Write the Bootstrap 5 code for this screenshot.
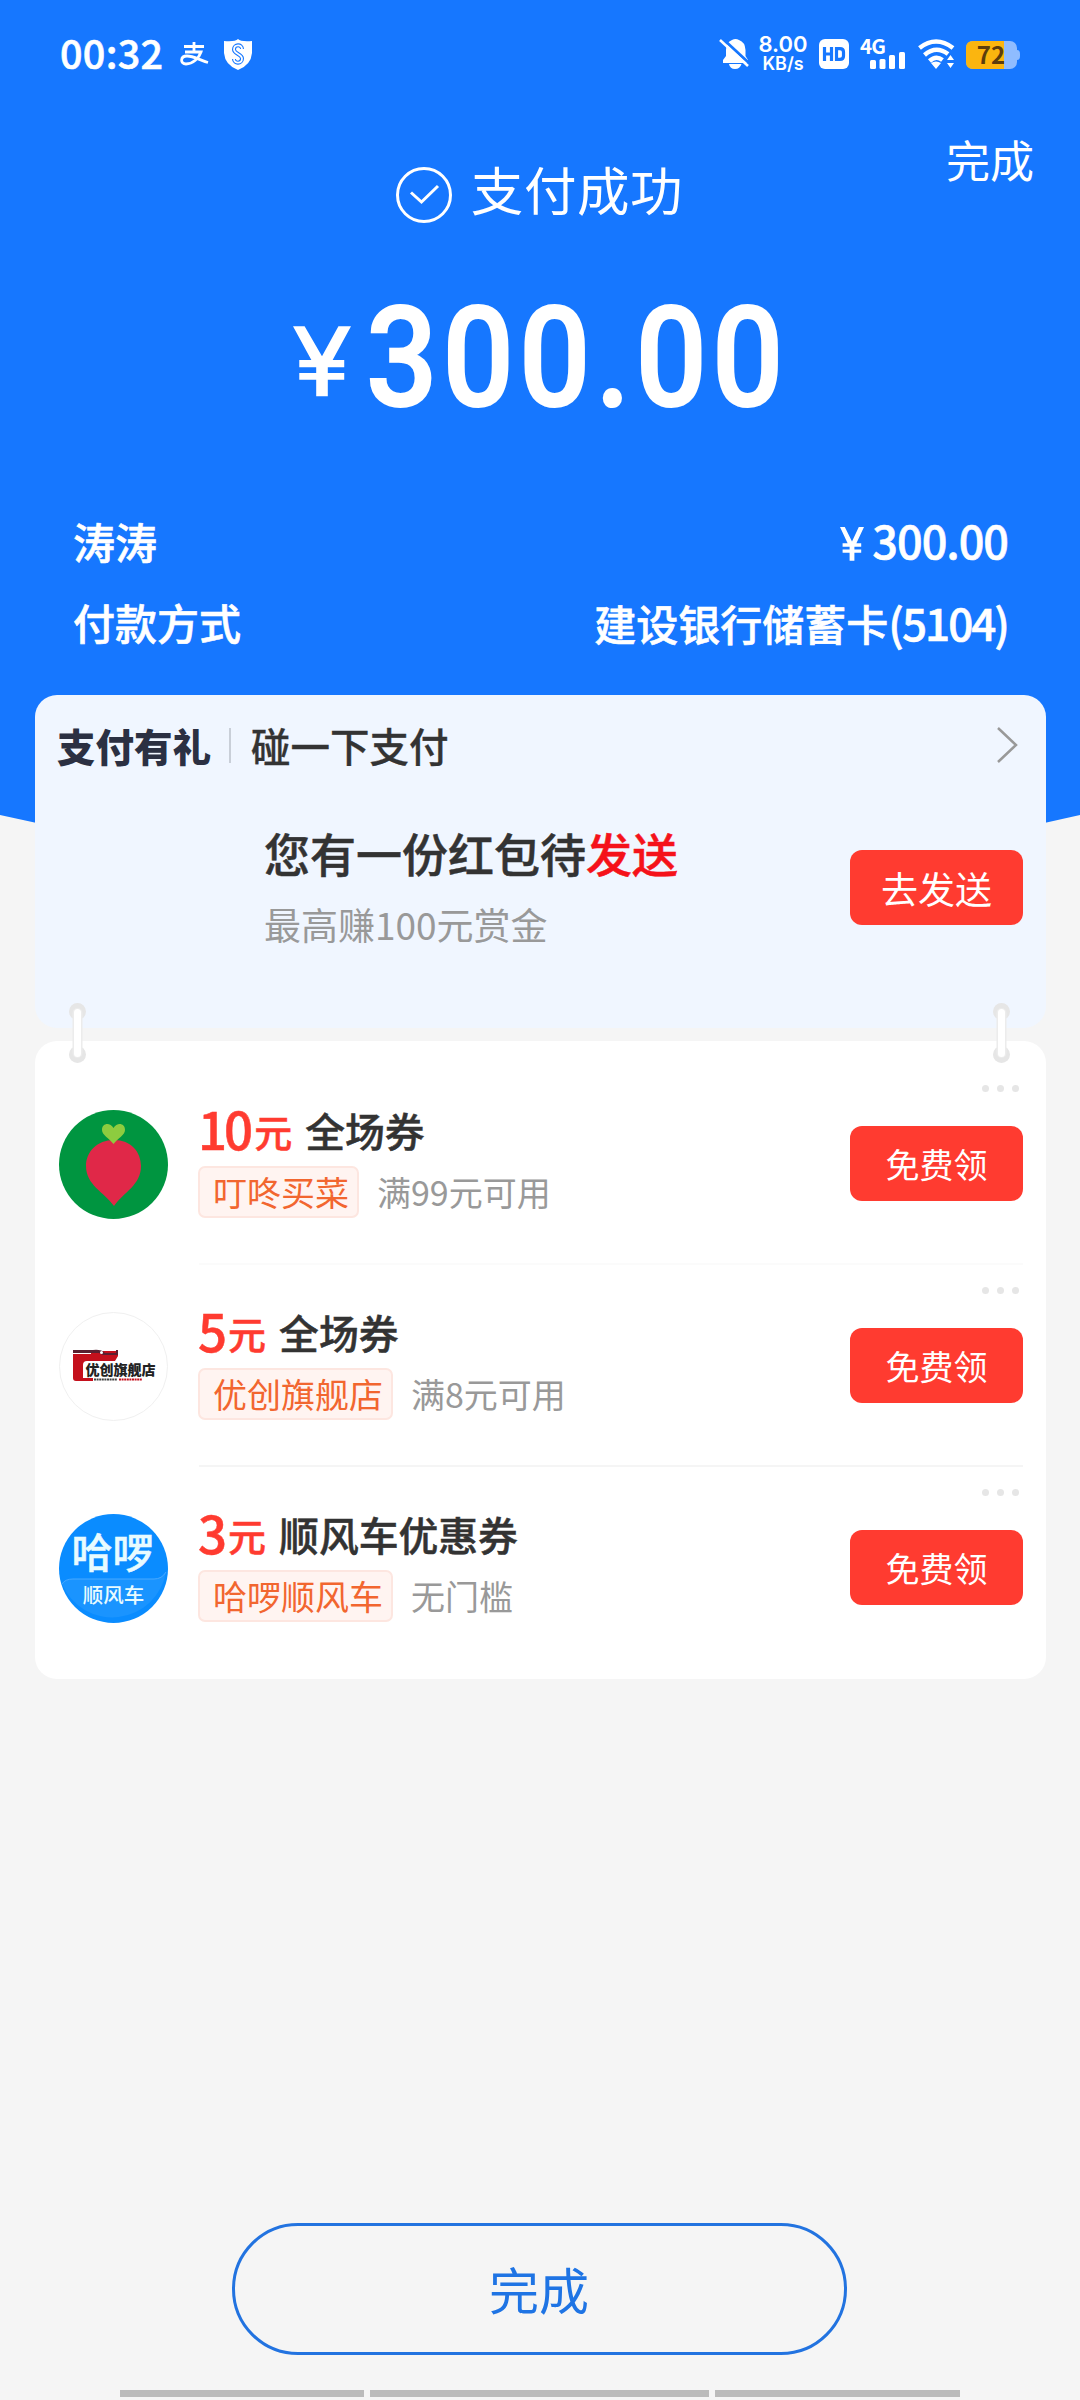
<!DOCTYPE html>
<html lang="zh-CN">
<head>
<meta charset="utf-8">
<meta name="viewport" content="width=device-width, initial-scale=1">
<title>支付成功</title>
<link href="https://cdn.jsdelivr.net/npm/bootstrap@5.3.0/dist/css/bootstrap.min.css" rel="stylesheet">
<style>
body{background:#f5f5f5;font-family:"Noto Sans CJK SC",sans-serif;width:1080px;height:2400px;overflow:hidden;line-height:1;color:#333}
.screen{height:2400px;width:1080px;isolation:isolate}
.hero-bg{left:0;top:0;width:1080px;height:860px;z-index:-1}
svg{display:block;flex:none;overflow:visible}
.statusbar{height:108px;padding:0 60px 0 60px}
.clock{font-size:39.5px;font-weight:500;letter-spacing:.3px;padding-bottom:4px;-webkit-text-stroke:.6px #fff}
.speed{font-family:Inter,"Noto Sans CJK SC",sans-serif;font-size:22px;font-weight:600;line-height:20px;width:50px;margin-top:-1px}
.speed-unit{font-size:18px;line-height:19px}
.done-link{right:46px;top:137px;font-size:44px;line-height:44px}
.head-title{margin-top:55px;height:60px;font-size:52.5px;letter-spacing:.6px;padding-right:2px}
.head-title span{padding-bottom:9px}
.amount{padding-left:293px;height:104px;margin-top:82px}
.digits{font-family:Roboto,sans-serif;font-weight:500;font-size:139px;letter-spacing:5.6px;line-height:104px;padding-top:4px;transform:scaleX(.904);transform-origin:0 50%;-webkit-text-stroke:2px #fff}
.yen-big{width:58px;height:73px;margin-right:15px;margin-top:8px}
.facts{font-size:42px;font-weight:500;padding:0 72px 0 73px;margin-top:91px;-webkit-text-stroke:.6px #fff}
.facts>div{height:81px}
.num{font-size:45px;letter-spacing:-1px}
.num svg{position:relative;top:-3px;margin-right:8px}
.num-card{font-size:44px;letter-spacing:-2px}
.gift{margin:33px 34px 0 35px;height:333px;border-radius:22px;background:#f0f6ff;padding:0 23px 0 22px}
.gift-head{height:100px}
.brandname{font-size:38.5px;font-weight:900;color:#2b3042}
.vbar{width:2px;height:35px;background:#c9cfd8;margin:0 20px 0 18px}
.gift-name{font-size:39.5px;font-weight:500;-webkit-text-stroke:.3px #333}
.gift-body{padding-left:207px;height:126px}
.gift-text{margin-top:34px}
.gift-msg{font-size:46px;font-weight:500;-webkit-text-stroke:.5px}
.hot{color:#f5121a}
.gift-sub{font-size:37px;color:#999;margin-top:31px;line-height:37px}
.btn-go{width:173px;height:75px;border-radius:12px;background:#ff3b30;color:#fff;border:0;font-size:34px;padding:0;line-height:72px}
.btn-go:hover{background:#ff3b30;color:#fff}
.btn-send{margin-top:55px;font-size:37px}
.coupons{margin:13px 34px 0 35px;height:638px;border-radius:22px;background:#fff;padding-left:24px;padding-right:23px}
.coupon{height:202px}
.coupon-icon{width:109px;height:109px;margin-top:69px}
.coupon-main{margin-left:30px;margin-top:62px;width:620px}
.coupon-title{height:63px;font-size:39.8px;font-weight:500;-webkit-text-stroke:.5px}
.coupon-title em{font-style:normal;position:relative;top:-3px}
.price{color:#ff3b30}
.price b{font-size:51px;font-weight:500;line-height:1;letter-spacing:-3px;margin-right:4px}
.price em{font-size:38px}
.title-txt{margin-left:13px}
.tagbox{height:52px;border:2px solid #fde6e0;background:#fff4f1;border-radius:7px;color:#f2662f;font-size:34px;padding:0 8px 0 13px;line-height:47px}
.cond{font-size:34px;color:#999;margin-left:18px}
.coupon .btn-go{margin-top:33px}
.dots{margin-top:44px;height:8px;margin-right:4px}
.dots i{width:7px;height:7px;border-radius:50%;background:#e6e6e6}
.hair{margin:20px 0 -22px 140px;height:2px;background:#f5f5f5}
.hair-soft{background:#fbfbfb}
.pin{top:1002px;z-index:2}
.finish{width:615px;height:132px;border:3px solid #2273e0;border-radius:66px;color:#1f74e4;font-size:50px;margin-top:544px;background:transparent;padding:0 0 3px;line-height:1;position:relative;left:-1px}
.navline{margin-top:35px;gap:6px;height:7px;width:840px}
.navline span{background:#bbb;height:7px}
</style>
</head>
<body>
<div class="screen position-relative">
<svg class="hero-bg position-absolute" viewBox="0 0 1080 860"><path fill="#1677ff" d="M0 0H1080V815Q540 940 0 815Z"/></svg>

<div class="statusbar d-flex align-items-center text-white">
  <span class="clock">00:32</span>
  <svg style="margin-left:16px" width="30" height="24" viewBox="0 0 30 24" fill="none" stroke="#fff" stroke-width="2.800"><path d="M5 4.500H25M15 0V10M6 10H22C20 16 14 22 7 22C1 22 1 14 8 14C15 14 20 18 29 20.500"/></svg>
  <svg style="margin-left:14px" width="30" height="31" viewBox="0 0 30 31"><path fill="#fff" d="M15 0Q18 3 29 2V14Q28 26 15 31Q2 26 1 14V2Q12 3 15 0Z"/><path d="M19 10C19 5 11 5 11 10.500C11 15 19 15 19 19.500C19 25 11 25 11 20" fill="none" stroke="#1677ff" stroke-width="4"/><path d="M19 10C19 5 11 5 11 10.500C11 15 19 15 19 19.500C19 25 11 25 11 20" fill="none" stroke="#fff" stroke-width="1.800"/></svg>
  <div class="ms-auto d-flex align-items-center">
    <svg width="30" height="32" viewBox="0 0 30 32"><path fill="#fff" d="M3 25V22L6 18V12Q6 4 12 2Q15.500 0 19 2Q25 4 25.500 12V18L28 22V25Z"/><path fill="#fff" d="M9 26H21.500Q20 31 15 31Q10 31 9 26Z"/><path stroke="#1677ff" stroke-width="3" d="M3 1L30 26"/><path stroke="#fff" stroke-width="2.500" d="M0 2L28 28"/></svg>
    <div class="speed text-center ms-2"><div>8.00</div><div class="speed-unit">KB/s</div></div>
    <svg style="margin-left:11px" width="30" height="30" viewBox="0 0 30 30"><rect width="30" height="30" rx="6" fill="#fff"/><path fill="none" stroke="#1677ff" stroke-width="3.200" d="M5.500 8V22M12.500 8V22M5.500 15H12.500M17.500 9.600H21Q24.500 9.600 24.500 13V17Q24.500 20.400 21 20.400H17.500Z"/></svg>
    <svg style="margin-left:11px" width="46" height="32" viewBox="0 0 46 32" fill="#fff"><text x="0" y="16" font-size="20.500" font-weight="700" letter-spacing="-.8" font-family="Noto Sans CJK SC">4G</text><rect x="10" y="22" width="6" height="9" rx="1.500"/><rect x="19.500" y="21" width="6" height="10" rx="1.500"/><rect x="29" y="17" width="6" height="14" rx="1.500"/><rect x="39" y="14" width="6" height="17" rx="1.500"/></svg>
    <svg style="margin-left:12px" width="38" height="30" viewBox="0 0 38 30" fill="none" stroke="#fff" stroke-width="4.500"><path d="M1.500 9Q18 -4 35 9M6.500 16Q18 6 30 15"/><path d="M11.500 22Q18 16 24.500 21" /><path fill="#fff" stroke="none" d="M13 24Q18 21 23 24L18 30ZM29 21H36L32.500 16ZM29 24H36L32.500 29Z"/></svg>
    <svg style="margin-left:10px" width="54" height="28" viewBox="0 0 54 28"><rect x="0" y="1" width="51" height="28" rx="7" fill="#8fbcff"/><path fill="#8fbcff" d="M51 10Q54 10 54 14V16Q54 20 51 20Z"/><path fill="#fbb50f" d="M7 1H38V29H7Q0 29 0 22V8Q0 1 7 1Z"/><text x="25" y="24" text-anchor="middle" font-size="24" font-weight="700" fill="#5c3d0c" font-family="Noto Sans CJK SC">72</text></svg>
  </div>
</div>
<div class="done-link position-absolute text-white">完成</div>

<div class="head-title d-flex align-items-center justify-content-center text-white">
  <svg style="margin-right:18px" width="58" height="58" viewBox="0 0 58 58" fill="none" stroke="#fff"><circle cx="29" cy="31" r="26.500" stroke-width="3"/><path stroke-width="3" d="M16 28.500L26.500 38L43 22"/></svg>
  <span>支付成功</span>
</div>
<div class="amount d-flex align-items-center text-white">
  <svg class="yen-big" viewBox="0 0 60 73"><path fill="#fff" d="M0 0H12L30 31L47 0H60L41 35H53V42.500H36V48.500H53V55.500H36V72.500H24V55.500H6.500V48.500H24V42.500H6.500V35H19Z"/></svg>
  <span class="digits">300.00</span>
</div>
<div class="facts text-white">
  <div class="d-flex align-items-center justify-content-between"><span>涛涛</span><span class="num"><svg class="d-inline-block" width="24" height="34" viewBox="0 0 60 73" preserveAspectRatio="none"><path fill="#fff" d="M0 0H12L30 31L47 0H60L41 35H53V42.500H36V48.500H53V55.500H36V72.500H24V55.500H6.500V48.500H24V42.500H6.500V35H19Z"/></svg>300.00</span></div>
  <div class="d-flex align-items-center justify-content-between"><span>付款方式</span><span>建设银行储蓄卡<span class="num-card">(5104)</span></span></div>
</div>

<section class="gift">
  <div class="gift-head d-flex align-items-center">
    <span class="brandname">支付有礼</span><span class="vbar"></span><span class="gift-name">碰一下支付</span>
    <svg class="ms-auto" style="margin-right:5px" width="21" height="36" viewBox="0 0 21 36" fill="none" stroke="#999" stroke-width="2.500"><path d="M1 1L19 18L1 35"/></svg>
  </div>
  <div class="gift-body d-flex justify-content-between">
    <div class="gift-text"><div class="gift-msg">您有一份红包待<span class="hot">发送</span></div><div class="gift-sub">最高赚100元赏金</div></div>
    <button class="btn btn-go btn-send">去发送</button>
  </div>
</section>
<svg class="pin position-absolute" style="left:68px" width="19" height="62" viewBox="0 0 19 62"><circle cx="9.500" cy="9.500" r="8.500" fill="#e6e6e6"/><circle cx="9.500" cy="52.500" r="8.500" fill="#e6e6e6"/><rect x="4.500" y="6" width="10" height="50" rx="5" fill="#ececec"/><rect x="6" y="7" width="7" height="48" rx="3.500" fill="#fff"/></svg>
<svg class="pin position-absolute" style="left:992px" width="19" height="62" viewBox="0 0 19 62"><circle cx="9.500" cy="9.500" r="8.500" fill="#e6e6e6"/><circle cx="9.500" cy="52.500" r="8.500" fill="#e6e6e6"/><rect x="4.500" y="6" width="10" height="50" rx="5" fill="#ececec"/><rect x="6" y="7" width="7" height="48" rx="3.500" fill="#fff"/></svg>

<section class="coupons">
  <div class="coupon d-flex">
    <svg class="coupon-icon" viewBox="0 0 109 109"><circle cx="54.500" cy="54.500" r="54.500" fill="#009540"/><path fill="#e02848" d="M55 30C72 30 82 42 82 56C82 75 65 82 55 96C45 82 27 75 27 56C27 42 38 30 55 30Z"/><path fill="#8dcc3f" d="M54.500 34C50 28 43 25 43 20C43 13 51 12 54.500 18C58 12 66 13 66 20C66 25 59 28 54.500 34Z"/></svg>
    <div class="coupon-main"><div class="coupon-title d-flex align-items-baseline"><span class="price"><b>10</b><em>元</em></span><em class="title-txt">全场券</em></div><div class="d-flex align-items-center"><span class="tagbox">叮咚买菜</span><span class="cond">满99元可用</span></div></div>
    <div class="ms-auto"><div class="dots d-flex justify-content-end gap-2"><i></i><i></i><i></i></div><button class="btn btn-go">免费领</button></div>
  </div>
  <div class="hair hair-soft"></div>
  <div class="coupon d-flex">
    <svg class="coupon-icon" viewBox="0 0 109 109"><circle cx="54.500" cy="54.500" r="54" fill="#fff" stroke="#f0f0f0"/><path fill="#c4101c" d="M14 42H32V39H59V44L56 49H28Q24 49 24 53V66H34V69H17Q14 69 14 66Z"/><path fill="#5a2030" d="M14 38H34Q42 37 46 41H57V38H59V43H44L40 41H14Z"/><circle cx="42.500" cy="40.500" r="1.500" fill="#fff"/><text x="26.500" y="63" font-size="14" font-weight="900" fill="#222" font-family="Noto Sans CJK SC">优创旗舰店</text><path stroke="#444" stroke-width="2.200" stroke-dasharray="2 .6" d="M35 67.500H58"/><path stroke="#c4101c" stroke-width="2.200" stroke-dasharray="2 .6" d="M60 67.500H83"/></svg>
    <div class="coupon-main"><div class="coupon-title d-flex align-items-baseline"><span class="price"><b>5</b><em>元</em></span><em class="title-txt">全场券</em></div><div class="d-flex align-items-center"><span class="tagbox">优创旗舰店</span><span class="cond">满8元可用</span></div></div>
    <div class="ms-auto"><div class="dots d-flex justify-content-end gap-2"><i></i><i></i><i></i></div><button class="btn btn-go">免费领</button></div>
  </div>
  <div class="hair"></div>
  <div class="coupon d-flex">
    <svg class="coupon-icon" viewBox="0 0 109 109"><circle cx="54.500" cy="54.500" r="54.500" fill="#0a8cff"/><path d="M3 70Q6 65 14 65H95Q103 65 107 58A54.500 54.500 0 0 1 3 70Z" fill="#1a94ff"/><path d="M3 70Q6 65 14 65H95Q103 65 107 58" fill="none" stroke="#46a8ff"/><text x="53.500" y="54" text-anchor="middle" font-size="41" font-weight="500" fill="#e8fbff" stroke="#e8fbff" stroke-width=".5" font-family="Noto Sans CJK SC">哈啰</text><text x="54.500" y="89" text-anchor="middle" font-size="20.500" font-weight="500" fill="#e8fbff" font-family="Noto Sans CJK SC">顺风车</text></svg>
    <div class="coupon-main"><div class="coupon-title d-flex align-items-baseline"><span class="price"><b>3</b><em>元</em></span><em class="title-txt">顺风车优惠券</em></div><div class="d-flex align-items-center"><span class="tagbox">哈啰顺风车</span><span class="cond">无门槛</span></div></div>
    <div class="ms-auto"><div class="dots d-flex justify-content-end gap-2"><i></i><i></i><i></i></div><button class="btn btn-go">免费领</button></div>
  </div>
</section>

<button class="btn finish d-block mx-auto">完成</button>
<div class="navline d-flex mx-auto"><span style="width:244px"></span><span style="width:339px"></span><span style="width:245px"></span></div>
</div>
<script src="https://cdn.jsdelivr.net/npm/bootstrap@5.3.0/dist/js/bootstrap.bundle.min.js"></script>
</body>
</html>
